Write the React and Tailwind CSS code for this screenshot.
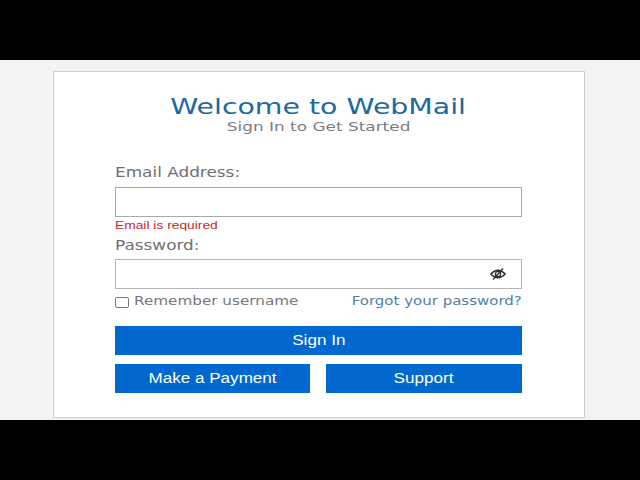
export default function App() {
  return (
    <div className="w-[640px] h-[480px] bg-black overflow-hidden font-['Liberation_Sans',sans-serif]">
      <div className="h-[60px]" />
      <div className="h-[360px] bg-[#f3f3f4] pl-[53px] pt-[11px]">
        <div className="w-[532px] h-[347px] bg-white border border-[#cfcfd1] pl-[61px] pr-[62px]">
          <div className="pt-[23px] text-center font-['DejaVu_Sans',sans-serif]">
            <h1 className="text-[21.5px] leading-[24px] text-[#20699f]">
              <span className="inline-block scale-x-[1.32]">Welcome to WebMail</span>
            </h1>
            <p className="mt-[1px] text-[13px] leading-[14px] text-[#7b7b7f]">
              <span className="inline-block scale-x-[1.3]">Sign In to Get Started</span>
            </p>
          </div>

          <form className="mt-[28px]">
            <label className="block text-[13.5px] leading-[20px] text-[#6f6f74] font-['DejaVu_Sans',sans-serif]">
              <span className="inline-block origin-left scale-x-[1.25]">Email Address:</span>
            </label>
            <input className="block mt-[5px] w-full h-[30px] border border-[#a9a9ad] bg-white" />
            <p className="text-[11.5px] leading-[16px] text-[#c9252b]">
              <span className="inline-block origin-left scale-x-[1.2]">Email is required</span>
            </p>
            <label className="block mt-[2px] text-[13.5px] leading-[20px] text-[#6f6f74] font-['DejaVu_Sans',sans-serif]">
              <span className="inline-block origin-left scale-x-[1.25]">Password:</span>
            </label>
            <div className="mt-[4px] h-[30px] border border-[#b5b5b8] flex items-center justify-end pr-[15px]">
              <svg width="16" height="12" viewBox="0 0 16 12" fill="none" stroke="#2c2c2c" strokeWidth="1.3">
                <path d="M0.8 6 Q8 -1.5 15.2 6 Q8 13.5 0.8 6 Z" />
                <circle cx="8" cy="6" r="2.6" />
                <path d="M3 11.5 L13 0.5" />
              </svg>
            </div>
            <div className="mt-[3px] h-[18px] flex items-center justify-between font-['DejaVu_Sans',sans-serif]">
              <label className="flex items-center text-[13px] text-[#77777b]">
                <span className="w-[14px] h-[11px] border border-[#77777b] rounded-[2px] mr-[5px] mt-[2px]" />
                <span className="inline-block origin-left scale-x-[1.17]">Remember username</span>
              </label>
              <a className="inline-block origin-right scale-x-[1.2] text-[12.5px] text-[#4f7fa6]">Forgot your password?</a>
            </div>
            <button type="button" className="block mt-[16px] w-full h-[29px] bg-[#0068cf] text-white text-[14px]">
              <span className="inline-block scale-x-[1.22]">Sign In</span>
            </button>
            <div className="mt-[9px] flex gap-[16px]">
              <button type="button" className="w-[195px] h-[29px] bg-[#0068cf] text-white text-[14px]">
                <span className="inline-block scale-x-[1.22]">Make a Payment</span>
              </button>
              <button type="button" className="flex-1 h-[29px] bg-[#0068cf] text-white text-[14px]">
                <span className="inline-block scale-x-[1.22]">Support</span>
              </button>
            </div>
          </form>
        </div>
      </div>
    </div>
  )
}
